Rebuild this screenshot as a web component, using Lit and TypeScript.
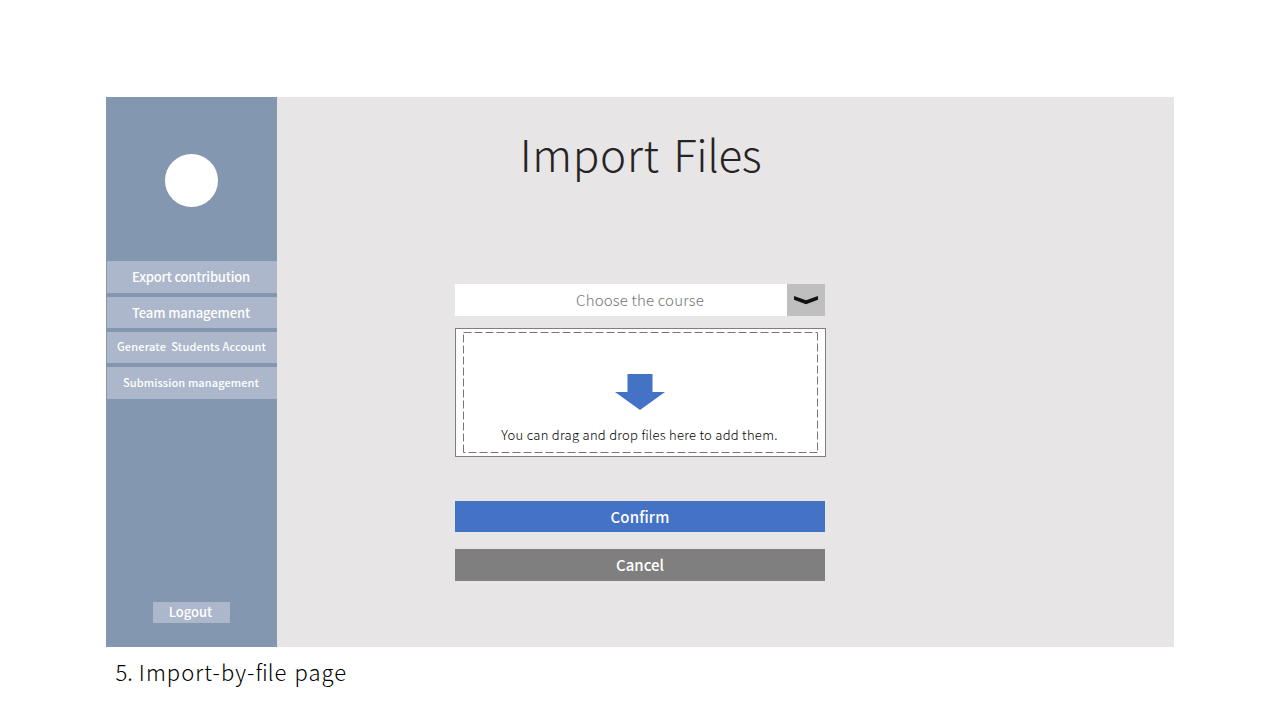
import { LitElement, html, css } from "lit";
import { customElement } from "lit/decorators.js";

@customElement("app-root")
export class AppRoot extends LitElement {
  static styles = css`
    :host {
      display: block;
      box-sizing: border-box;
      width: 1280px;
      height: 720px;
      padding: 97px 106px 0;
      overflow: hidden;
      background: #fff;
      font-family: "Noto Sans CJK SC", "Open Sans", sans-serif;
      white-space: pre;
    }
    .frame { display: flex; height: 550px; background: #e7e5e6; }
    .side {
      box-sizing: border-box;
      width: 171px;
      padding: 57px 0 24px 1px;
      display: flex;
      flex-direction: column;
      background: #8497b0;
      color: #fff;
      font-weight: 500;
    }
    .avatar { width: 53px; height: 53px; margin-left: 58px; border-radius: 50%; background: #fff; }
    nav { display: grid; grid-template-rows: 32px 31px 31px 32px; row-gap: 4px; margin-top: 54px; }
    .item, .logout, .btn { display: flex; align-items: center; justify-content: center; line-height: 20px; }
    .item { background: #adb7cb; padding-right: 2px; font-size: 13px; letter-spacing: -0.1px; }
    .export { letter-spacing: -0.2px; }
    .small { font-size: 11px; padding-bottom: 2px; }
    .generate { letter-spacing: 0.17px; padding: 0 1px 3px 0; }
    .submission { letter-spacing: 0.1px; }
    .logout { width: 75px; height: 19px; padding: 0 2px 2px 0; margin: auto 0 0 46px; background: #adb7cb; font-size: 13px; }
    .main { width: 371px; margin-left: 178px; display: flex; flex-direction: column; }
    h1 { margin: 22px 0 0; height: 165px; line-height: 68px; font-size: 44px; font-weight: 300; text-align: center; color: #262324; word-spacing: 4px; }
    .wide { letter-spacing: 0.7px; }
    .tight { letter-spacing: -0.4px; }
    .select { display: flex; width: 370px; height: 32px; background: #fff; }
    .value { flex: 1; padding-left: 38px; text-align: center; font-size: 15px; line-height: 32px; font-weight: 300; color: #757575; letter-spacing: 0.18px; }
    .toggle { width: 38px; background: #bfbfbf; }
    .drop { box-sizing: border-box; height: 129px; margin-top: 12px; border: 1px solid #7f7f7f; background: #fff; display: grid; }
    .drop > * { grid-area: 1 / 1; }
    .hint { padding: 45px 2px 0 0; display: flex; flex-direction: column; align-items: center; font-size: 13px; line-height: 20px; color: #000; font-weight: 300; letter-spacing: 0.28px; }
    .arrow { margin-bottom: 15px; }
    .btn { width: 370px; height: 31px; font-size: 15px; font-weight: 500; color: #fff; }
    .confirm { margin-top: 44px; background: #4472c4; letter-spacing: 0.2px; }
    .cancel { margin-top: 17px; height: 32px; background: #7f7f7f; }
    .caption { padding: 7px 0 0 9.5px; font-size: 22px; line-height: 34px; font-weight: 300; color: #000; word-spacing: 1.2px; }
    .name { letter-spacing: 1.05px; }
    .lig { letter-spacing: normal; }
    svg { display: block; }
  `;

  render() {
    return html`<div class="frame"><aside class="side"><div class="avatar"></div><nav><div class="item export">Export contribution</div><div class="item">Team management</div><div class="item small generate">Generate  Students Account</div><div class="item small submission">Submission management</div></nav><div class="logout">Logout</div></aside><main class="main"><h1><span class="wide">Import</span> <span class="tight">Files</span></h1><div class="select"><div class="value">Choose the course</div><div class="toggle"><svg width="38" height="32" viewBox="0 0 38 32"><path d="M7 12L19 16.2L31 12V15.8L19 20.2L7 15.8Z" fill="#111"/></svg></div></div><div class="drop"><svg width="369" height="127" viewBox="0 0 369 127" fill="none" stroke="#767676"><path d="M7.5 3.5H361.5" stroke-dasharray="8 3"/><path d="M361.5 3.5V123.5" stroke-dasharray="8 3"/><path d="M361.5 123.5H7.5" stroke-dasharray="8 3"/><path d="M7.5 123.5V3.5" stroke-dasharray="8 3"/></svg><div class="hint"><svg class="arrow" width="50" height="36" viewBox="0 0 50 36"><path d="M12.5 0H37.5V18H50L25 36L0 18H12.5Z" fill="#4472c4"/></svg><span>You can drag and drop <span class="lig">fi</span>les here to add them.</span></div></div><div class="btn confirm"><span>Con<span class="lig">fi</span>rm</span></div><div class="btn cancel">Cancel</div></main></div><div class="caption">5. <span class="name">Import-by-<span class="lig">fi</span>le page</span></div>`;
  }
}
